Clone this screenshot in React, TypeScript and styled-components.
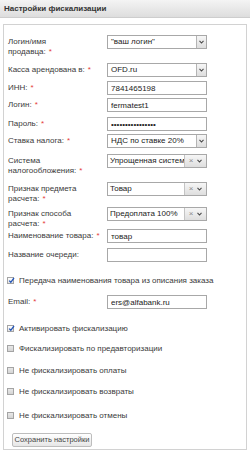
import styled, { createGlobalStyle } from "styled-components";

const GlobalStyle = createGlobalStyle`
  html, body {
    margin: 0;
    padding: 0;
    background: #fff;
  }
  body {
    font-family: "Liberation Sans", Arial, sans-serif;
    font-size: 8px;
    color: #3a3a3a;
  }
`;

const Page = styled.div`
  width: 250px;
`;

const Header = styled.div`
  height: 17px;
  border-bottom: 1px solid #cdcdcd;
  background: linear-gradient(#f4f4f4, #dddddd);
  padding-left: 4px;
  display: flex;
  align-items: center;
  font-weight: bold;
  font-size: 8px;
  color: #333;
`;

const Panel = styled.div`
  margin: 6px 3px 0 3px;
  border: 1px solid #d2d2d2;
  padding: 10px 4px 2px 4px;
`;

const Row = styled.div<{ $h: number; $mt?: number }>`
  display: grid;
  grid-template-columns: 99px 100px;
  align-items: start;
  height: ${({ $h }) => $h}px;
  margin-top: ${({ $mt }) => $mt ?? 0}px;
`;

const Label = styled.div<{ $lines?: number }>`
  line-height: ${({ $lines }) => ($lines === 2 ? "10px" : "14px")};
  padding-top: ${({ $lines }) => ($lines === 2 ? "2px" : "0")};
  white-space: nowrap;
`;

const Req = styled.span`
  color: #e53a3a;
  margin-left: 3px;
`;

const TextInput = styled.input`
  box-sizing: border-box;
  width: 100px;
  height: 14px;
  margin: 0;
  border: 1px solid #a8a8a8;
  padding: 0 3px;
  font-family: inherit;
  font-size: 8px;
  color: #222;
  background: #fff;
  outline: none;
`;

const SelectBox = styled.div`
  box-sizing: border-box;
  width: 100px;
  height: 14px;
  border: 1px solid #a8a8a8;
  display: flex;
  background: #fff;
`;

const SelectValue = styled.div<{ $clearable?: boolean }>`
  flex: 1;
  min-width: 0;
  padding-left: ${({ $clearable }) => ($clearable ? "2px" : "3px")};
  line-height: 12px;
  white-space: nowrap;
  overflow: hidden;
  color: #222;
`;

const SelectButtons = styled.div<{ $clearable?: boolean }>`
  flex: none;
  width: ${({ $clearable }) => ($clearable ? "21px" : "9px")};
  border-left: 1px solid ${({ $clearable }) => ($clearable ? "#c4c4c4" : "#b4b4b4")};
  background: linear-gradient(#f6f6f6, #dedede);
  display: flex;
  align-items: center;
  justify-content: space-evenly;
`;

const ClearMark = styled.span`
  color: #8a8a8a;
  font-size: 8px;
  line-height: 12px;
`;

const Chevron = () => (
  <svg width="5" height="4" viewBox="0 0 5 4">
    <path d="M0.5 0.8 L2.5 3 L4.5 0.8" fill="none" stroke="#4a4a4a" strokeWidth="1.1" />
  </svg>
);

const CheckRow = styled.label<{ $mt: number }>`
  display: flex;
  align-items: center;
  height: 14px;
  margin-top: ${({ $mt }) => $mt}px;
  margin-left: -1px;
  gap: 5px;
  white-space: nowrap;
`;

const Box = styled.span<{ $checked?: boolean }>`
  box-sizing: border-box;
  flex: none;
  width: 7px;
  height: 7px;
  border: 1px solid #a4a4a4;
  background: ${({ $checked }) =>
    $checked ? "linear-gradient(#ffffff, #e4e4e4)" : "linear-gradient(#e8e8e8, #d4d4d4)"};
  position: relative;
`;

const Tick = () => (
  <svg width="7" height="7" viewBox="0 0 7 7" style={{ position: "absolute", left: 0, top: -1 }}>
    <path d="M1.2 3.6 L2.8 5.3 L6 1" fill="none" stroke="#2456b8" strokeWidth="1.3" />
  </svg>
);

const SaveButton = styled.button`
  display: block;
  margin: 11px 0 0 4px;
  width: 80px;
  height: 14px;
  padding: 0;
  border: 1px solid #bdbdbd;
  border-radius: 2px;
  background: linear-gradient(#ffffff, #e6e6e6);
  font-family: inherit;
  font-size: 7.5px;
  line-height: 12px;
  white-space: nowrap;
  color: #444;
`;

type Field =
  | { kind: "input"; value: string; password?: boolean }
  | { kind: "select"; value: string; clearable?: boolean };

type FieldRow = { label: string[]; req: boolean; h: number; field: Field };

const rows: FieldRow[] = [
  { label: ["Логин/имя", "продавца:"], req: true, h: 28, field: { kind: "select", value: "\"ваш логин\"" } },
  { label: ["Касса арендована в:"], req: true, h: 18, field: { kind: "select", value: "OFD.ru" } },
  { label: ["ИНН:"], req: true, h: 17, field: { kind: "input", value: "7841465198" } },
  { label: ["Логин:"], req: true, h: 19, field: { kind: "input", value: "fermatest1" } },
  { label: ["Пароль:"], req: true, h: 17, field: { kind: "input", value: "passwordpassword", password: true } },
  { label: ["Ставка налога:"], req: true, h: 20, field: { kind: "select", value: "НДС по ставке 20%" } },
  { label: ["Система", "налогообложения:"], req: true, h: 28, field: { kind: "select", value: "Упрощенная систем", clearable: true } },
  { label: ["Признак предмета", "расчета:"], req: true, h: 25, field: { kind: "select", value: "Товар", clearable: true } },
  { label: ["Признак способа", "расчета:"], req: true, h: 22, field: { kind: "select", value: "Предоплата 100%", clearable: true } },
  { label: ["Наименование товара:"], req: true, h: 19, field: { kind: "input", value: "товар" } },
  { label: ["Название очереди:"], req: false, h: 14, field: { kind: "input", value: "" } },
];

const renderField = (field: Field) => {
  if (field.kind === "input") {
    return (
      <TextInput
        type={field.password ? "password" : "text"}
        defaultValue={field.value}
        readOnly
      />
    );
  }
  return (
    <SelectBox>
      <SelectValue $clearable={field.clearable}>{field.value}</SelectValue>
      <SelectButtons $clearable={field.clearable}>
        {field.clearable && <ClearMark>×</ClearMark>}
        <Chevron />
      </SelectButtons>
    </SelectBox>
  );
};

const renderLabel = (row: { label: string[]; req: boolean }) => (
  <Label $lines={row.label.length}>
    {row.label.map((line, i) => (
      <span key={i}>
        {i > 0 && <br />}
        {line}
        {i === row.label.length - 1 && row.req && <Req>*</Req>}
      </span>
    ))}
  </Label>
);

const checks = [
  { text: "Активировать фискализацию", checked: true, mt: 12 },
  { text: "Фискализировать по предавторизации", checked: false, mt: 6 },
  { text: "Не фискализировать оплаты", checked: false, mt: 8 },
  { text: "Не фискализировать возвраты", checked: false, mt: 7 },
  { text: "Не фискализировать отмены", checked: false, mt: 10 },
];

export default function App() {
  return (
    <Page>
      <GlobalStyle />
      <Header>Настройки фискализации</Header>
      <Panel>
        {rows.map((row, i) => (
          <Row key={i} $h={row.h}>
            {renderLabel(row)}
            {renderField(row.field)}
          </Row>
        ))}
        <CheckRow $mt={11}>
          <Box $checked>
            <Tick />
          </Box>
          Передача наименования товара из описания заказа
        </CheckRow>
        <Row $h={14} $mt={8}>
          {renderLabel({ label: ["Email:"], req: true })}
          {renderField({ kind: "input", value: "ers@alfabank.ru" })}
        </Row>
        {checks.map((c, i) => (
          <CheckRow key={i} $mt={c.mt}>
            <Box $checked={c.checked}>{c.checked && <Tick />}</Box>
            {c.text}
          </CheckRow>
        ))}
        <SaveButton type="button">Сохранить настройки</SaveButton>
      </Panel>
    </Page>
  );
}
